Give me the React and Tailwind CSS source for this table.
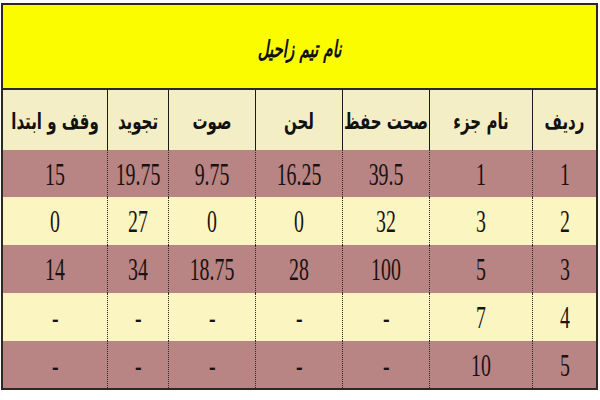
import React from "react";

const columns = [
  { key: "radif", label: "ردیف" },
  { key: "joz", label: "نام جزء" },
  { key: "hefz", label: "صحت حفظ" },
  { key: "lahn", label: "لحن" },
  { key: "sot", label: "صوت" },
  { key: "tajvid", label: "تجوید" },
  { key: "vaghf", label: "وقف و ابتدا" },
];

const rows = [
  ["1", "1", "39.5", "16.25", "9.75", "19.75", "15"],
  ["2", "3", "32", "0", "0", "27", "0"],
  ["3", "5", "100", "28", "18.75", "34", "14"],
  ["4", "7", "-", "-", "-", "-", "-"],
  ["5", "10", "-", "-", "-", "-", "-"],
];

const rowHeights = ["h-[47px]", "h-[48px]", "h-[48px]", "h-[48px]", "h-[47px]"];

const gridCols = "grid grid-cols-[64px_103px_87px_87px_87px_61px_104px]";

const App = () => {
  return (
    <div className="w-[600px] h-[400px] bg-white pt-[3px] pl-[1px]">
      <div
        dir="rtl"
        className="w-[597px] border-2 border-[#2a2a22] font-['DejaVu_Sans',sans-serif]"
      >
        {/* title */}
        <div className="h-[85px] bg-[#fcfc00] border-b-2 border-[#2a2a22] flex items-center justify-center">
          <span className="inline-block whitespace-nowrap scale-y-[1.55] text-[15px] font-bold italic text-[#111] pt-1">
            نام تیم زاحیل
          </span>
        </div>

        {/* header row */}
        <div className={`${gridCols} h-[60px] bg-[#f3eec6]`}>
          {columns.map((col, i) => (
            <div
              key={col.key}
              className={`flex items-center justify-center pt-[5px] ${
                i < columns.length - 1 ? "border-l border-[#1a1a1a]" : ""
              }`}
            >
              <span className="inline-block whitespace-nowrap scale-y-[1.5] text-[15px] font-bold text-[#111]">
                {col.label}
              </span>
            </div>
          ))}
        </div>

        {/* data rows */}
        {rows.map((row, r) => (
          <div
            key={r}
            className={`${gridCols} ${rowHeights[r]} ${
              r % 2 === 0 ? "bg-[#b88484]" : "bg-[#fbf6c1]"
            }`}
          >
            {row.map((val, i) => (
              <div
                key={i}
                className={`flex items-center justify-center ${
                  i < row.length - 1 ? "border-l border-dotted border-[#2a2a2a]" : ""
                }`}
              >
                <span
                  dir="ltr"
                  className="inline-block scale-x-[0.62] font-['Liberation_Serif',serif] text-[32px] leading-none text-[#1a1212]"
                >
                  {val}
                </span>
              </div>
            ))}
          </div>
        ))}
      </div>
    </div>
  );
};

export default App;
